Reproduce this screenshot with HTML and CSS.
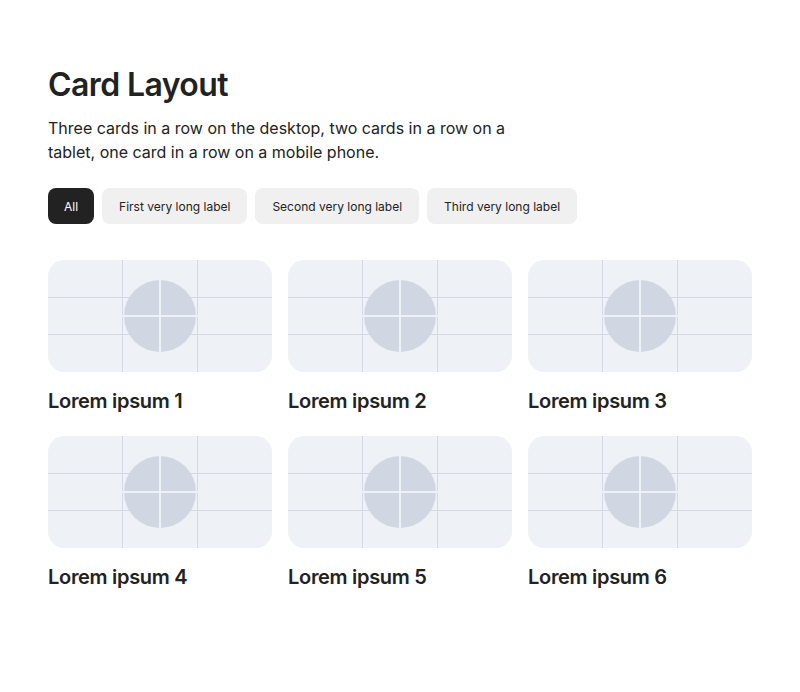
FILE: index.html
```html
<!DOCTYPE html>
<html>
<head>
<meta charset="utf-8">
<link rel="stylesheet" href="styles.css">
</head>
<body>
<main class="page">
  <h1 class="title">Card Layout</h1>
  <p class="lead">Three cards in a row on the desktop, two cards in a row on a tablet, one card in a row on a mobile phone.</p>
  <div class="filters">
    <button class="chip active">All</button>
    <button class="chip">First very long label</button>
    <button class="chip">Second very long label</button>
    <button class="chip">Third very long label</button>
  </div>
  <div class="grid">
    <div class="card"><div class="thumb"><svg viewBox="0 0 224 112" width="224" height="112"><g stroke="#d3d9e6" stroke-width="1"><line x1="74.5" y1="0" x2="74.5" y2="112"/><line x1="149.5" y1="0" x2="149.5" y2="112"/><line x1="0" y1="37.5" x2="224" y2="37.5"/><line x1="0" y1="74.5" x2="224" y2="74.5"/></g><circle cx="112" cy="56" r="36" fill="#d0d7e3"/><g stroke="#eef1f6" stroke-width="2"><line x1="112" y1="18" x2="112" y2="94"/><line x1="74" y1="56" x2="150" y2="56"/></g></svg></div><h2 class="card-title">Lorem ipsum 1</h2></div>
    <div class="card"><div class="thumb"><svg viewBox="0 0 224 112" width="224" height="112"><g stroke="#d3d9e6" stroke-width="1"><line x1="74.5" y1="0" x2="74.5" y2="112"/><line x1="149.5" y1="0" x2="149.5" y2="112"/><line x1="0" y1="37.5" x2="224" y2="37.5"/><line x1="0" y1="74.5" x2="224" y2="74.5"/></g><circle cx="112" cy="56" r="36" fill="#d0d7e3"/><g stroke="#eef1f6" stroke-width="2"><line x1="112" y1="18" x2="112" y2="94"/><line x1="74" y1="56" x2="150" y2="56"/></g></svg></div><h2 class="card-title">Lorem ipsum 2</h2></div>
    <div class="card"><div class="thumb"><svg viewBox="0 0 224 112" width="224" height="112"><g stroke="#d3d9e6" stroke-width="1"><line x1="74.5" y1="0" x2="74.5" y2="112"/><line x1="149.5" y1="0" x2="149.5" y2="112"/><line x1="0" y1="37.5" x2="224" y2="37.5"/><line x1="0" y1="74.5" x2="224" y2="74.5"/></g><circle cx="112" cy="56" r="36" fill="#d0d7e3"/><g stroke="#eef1f6" stroke-width="2"><line x1="112" y1="18" x2="112" y2="94"/><line x1="74" y1="56" x2="150" y2="56"/></g></svg></div><h2 class="card-title">Lorem ipsum 3</h2></div>
    <div class="card"><div class="thumb"><svg viewBox="0 0 224 112" width="224" height="112"><g stroke="#d3d9e6" stroke-width="1"><line x1="74.5" y1="0" x2="74.5" y2="112"/><line x1="149.5" y1="0" x2="149.5" y2="112"/><line x1="0" y1="37.5" x2="224" y2="37.5"/><line x1="0" y1="74.5" x2="224" y2="74.5"/></g><circle cx="112" cy="56" r="36" fill="#d0d7e3"/><g stroke="#eef1f6" stroke-width="2"><line x1="112" y1="18" x2="112" y2="94"/><line x1="74" y1="56" x2="150" y2="56"/></g></svg></div><h2 class="card-title">Lorem ipsum 4</h2></div>
    <div class="card"><div class="thumb"><svg viewBox="0 0 224 112" width="224" height="112"><g stroke="#d3d9e6" stroke-width="1"><line x1="74.5" y1="0" x2="74.5" y2="112"/><line x1="149.5" y1="0" x2="149.5" y2="112"/><line x1="0" y1="37.5" x2="224" y2="37.5"/><line x1="0" y1="74.5" x2="224" y2="74.5"/></g><circle cx="112" cy="56" r="36" fill="#d0d7e3"/><g stroke="#eef1f6" stroke-width="2"><line x1="112" y1="18" x2="112" y2="94"/><line x1="74" y1="56" x2="150" y2="56"/></g></svg></div><h2 class="card-title">Lorem ipsum 5</h2></div>
    <div class="card"><div class="thumb"><svg viewBox="0 0 224 112" width="224" height="112"><g stroke="#d3d9e6" stroke-width="1"><line x1="74.5" y1="0" x2="74.5" y2="112"/><line x1="149.5" y1="0" x2="149.5" y2="112"/><line x1="0" y1="37.5" x2="224" y2="37.5"/><line x1="0" y1="74.5" x2="224" y2="74.5"/></g><circle cx="112" cy="56" r="36" fill="#d0d7e3"/><g stroke="#eef1f6" stroke-width="2"><line x1="112" y1="18" x2="112" y2="94"/><line x1="74" y1="56" x2="150" y2="56"/></g></svg></div><h2 class="card-title">Lorem ipsum 6</h2></div>
  </div>
</main>
</body>
</html>
```
FILE: styles.css
```css
* { box-sizing: border-box; }
html, body { margin: 0; padding: 0; background: #fff; }
body {
  font-family: Inter, "Liberation Sans", Arial, sans-serif;
  color: #222;
}
.page {
  padding: 66px 48px 64px;
}
.title {
  margin: 0;
  font-size: 32px;
  line-height: 38px;
  font-weight: 600;
  letter-spacing: -0.6px;
}
.lead {
  margin: 12px 0 0;
  max-width: 480px;
  font-size: 16px;
  line-height: 24px;
}
.filters {
  display: flex;
  gap: 8px;
  margin-top: 24px;
}
.chip {
  height: 36px;
  padding: 0 17px;
  border: 0;
  border-radius: 8px;
  background: #f0f0f0;
  color: #222;
  font-family: inherit;
  font-size: 12px;
}
.chip.active {
  background: #222;
  color: #fff;
  padding: 0 16px;
}
.grid {
  margin-top: 36px;
  display: grid;
  grid-template-columns: repeat(3, 1fr);
  column-gap: 16px;
  row-gap: 23px;
}
.thumb {
  height: 112px;
  border-radius: 16px;
  background: #eef1f6;
  overflow: hidden;
}
.thumb svg { display: block; width: 100%; height: 100%; }
.card-title {
  margin: 17px 0 0;
  font-size: 20px;
  line-height: 24px;
  font-weight: 600;
  letter-spacing: -0.3px;
}
```
